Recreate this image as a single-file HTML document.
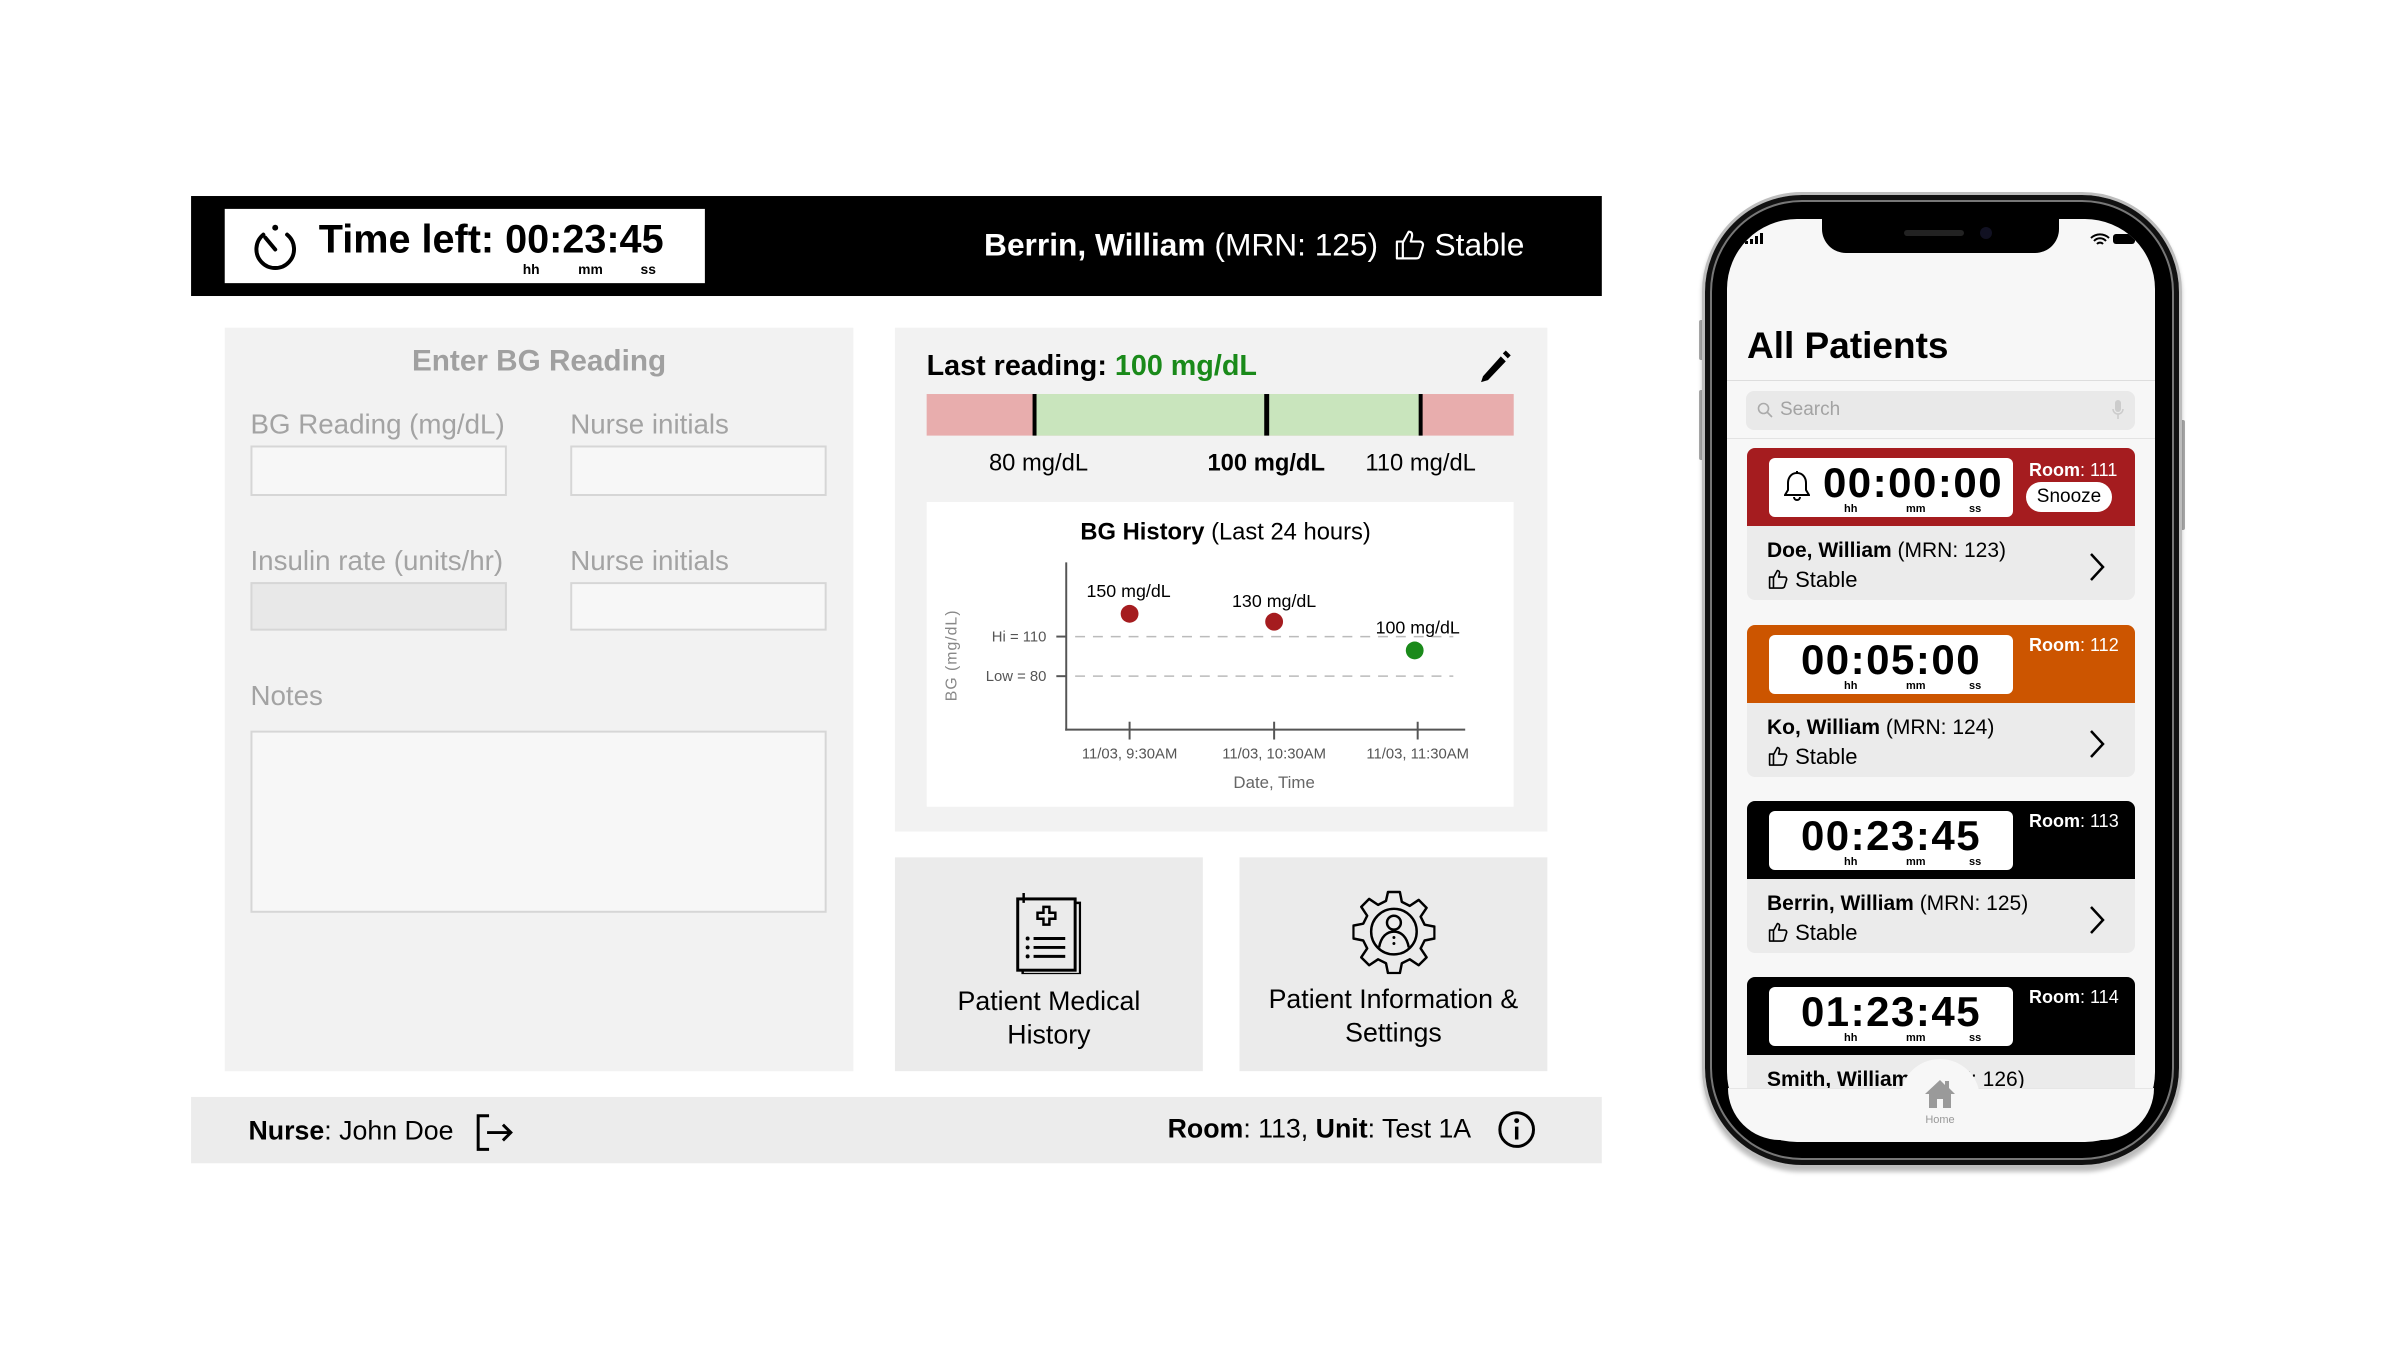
<!DOCTYPE html>
<html><head><meta charset="utf-8"><style>
*{margin:0;padding:0;box-sizing:border-box}
body{width:2382px;height:1360px;background:#fff;position:relative;overflow:hidden;font-family:"Liberation Sans",Arial,sans-serif;color:#000}
.a{position:absolute}
#L{position:absolute;left:0;top:0;width:2382px;height:1360px;transform:scale(0.99);transform-origin:0 0}
.lbl{position:absolute;font-size:28px;color:#a3a3a3;white-space:nowrap}
.inp{position:absolute;background:#f7f7f7;border:2px solid #d6d6d6}
.card{position:absolute;left:1747px;width:388px;height:152px;border-radius:8px;overflow:hidden;background:#ebebeb}
.ch{position:absolute;left:0;top:0;width:388px;height:78px}
.tb{position:absolute;left:22px;top:10px;width:244px;height:59px;background:#fff;border-radius:6px}
.dg{position:absolute;left:0;width:244px;text-align:center;top:2px;font-size:42px;font-weight:bold;letter-spacing:1.5px;line-height:46px}
.u{position:absolute;top:45px;font-size:11px;font-weight:bold}
.room{position:absolute;left:282px;top:10px;color:#fff;font-size:18px;white-space:nowrap}
.nm{position:absolute;left:20px;top:91px;font-size:21px;white-space:nowrap}
</style></head><body>
<div id="L">
<!-- Header -->
<div class="a" style="left:193px;top:198px;width:1425px;height:101px;background:#000"></div>
<div class="a" style="left:227px;top:211px;width:485px;height:75px;background:#fff"></div>
<svg class="a" style="left:254px;top:224px" width="48" height="50" viewBox="0 0 48 50"><path d="M12 13 A19 19 0 1 0 36 13" fill="none" stroke="#000" stroke-width="4" stroke-linecap="round"/><circle cx="24" cy="6" r="3" fill="#000"/><path d="M14 16 L24 28" stroke="#000" stroke-width="4" stroke-linecap="round"/></svg>
<div class="a" style="left:322px;top:220px;font-size:40px;font-weight:bold;white-space:nowrap">Time left: 00:23:45</div>
<div class="a" style="left:528px;top:264px;font-size:14px;font-weight:bold">hh</div>
<div class="a" style="left:584px;top:264px;font-size:14px;font-weight:bold">mm</div>
<div class="a" style="left:647px;top:264px;font-size:14px;font-weight:bold">ss</div>
<div class="a" style="left:994px;top:229px;font-size:32px;color:#fff;white-space:nowrap"><b>Berrin, William</b> (MRN: 125)</div>
<svg class="a" style="left:1408px;top:230px" width="32" height="34" viewBox="0 0 32 34"><path d="M3 14h6v17H3z M9 15 L15 4 c3 0 4 2 3 6 l-1 4 h9 c3 0 4 3 3 5 l-3 10 c-1 2-2 2-4 2 H9" fill="none" stroke="#fff" stroke-width="2.2" stroke-linejoin="round"/></svg>
<div class="a" style="left:1449px;top:229px;font-size:32px;color:#fff">Stable</div>

<!-- Left panel -->
<div class="a" style="left:227px;top:331px;width:635px;height:751px;background:#f2f2f2"></div>
<div class="a" style="left:227px;top:348px;width:635px;text-align:center;font-size:30px;font-weight:bold;color:#a0a0a0">Enter BG Reading</div>
<div class="lbl" style="left:253px;top:413px">BG Reading (mg/dL)</div>
<div class="lbl" style="left:576px;top:413px">Nurse initials</div>
<div class="inp" style="left:253px;top:450px;width:259px;height:51px"></div>
<div class="inp" style="left:576px;top:450px;width:259px;height:51px"></div>
<div class="lbl" style="left:253px;top:551px">Insulin rate (units/hr)</div>
<div class="lbl" style="left:576px;top:551px">Nurse initials</div>
<div class="inp" style="left:253px;top:588px;width:259px;height:49px;background:#e8e8e8"></div>
<div class="inp" style="left:576px;top:588px;width:259px;height:49px"></div>
<div class="lbl" style="left:253px;top:687px">Notes</div>
<div class="inp" style="left:253px;top:738px;width:582px;height:184px"></div>

<!-- Right top panel -->
<div class="a" style="left:904px;top:331px;width:659px;height:509px;background:#f2f2f2"></div>
<div class="a" style="left:936px;top:354px;font-size:29px;font-weight:bold;white-space:nowrap">Last reading: <span style="color:#1a8a1a">100 mg/dL</span></div>
<svg class="a" style="left:1492px;top:352px" width="36" height="36" viewBox="0 0 36 36"><path d="M6 28 L24 8 L29 13 L11 32 L4 34 Z" fill="#000"/><path d="M26 5 L29 2 L34 7 L31 10 Z" fill="#000"/></svg>
<div class="a" style="left:936px;top:398px;width:593px;height:42px;background:#e8adad"></div>
<div class="a" style="left:1045px;top:398px;width:390px;height:42px;background:#c9e5bd"></div>
<div class="a" style="left:1043px;top:398px;width:4px;height:42px;background:#000"></div>
<div class="a" style="left:1277px;top:398px;width:5px;height:42px;background:#000"></div>
<div class="a" style="left:1433px;top:398px;width:4px;height:42px;background:#000"></div>
<div class="a" style="left:989px;top:454px;width:120px;text-align:center;font-size:24px">80 mg/dL</div>
<div class="a" style="left:1209px;top:454px;width:140px;text-align:center;font-size:24px;font-weight:bold">100 mg/dL</div>
<div class="a" style="left:1365px;top:454px;width:140px;text-align:center;font-size:24px">110 mg/dL</div>

<svg class="a" style="left:936px;top:507px" width="593" height="308" viewBox="0 0 593 308" font-family="Liberation Sans, Arial, sans-serif">
<rect width="593" height="308" fill="#fff"/>
<text x="302" y="38" font-size="24" text-anchor="middle"><tspan font-weight="bold">BG History</tspan> (Last 24 hours)</text>
<line x1="141" y1="61" x2="141" y2="231" stroke="#555" stroke-width="2"/>
<line x1="140" y1="230" x2="544" y2="230" stroke="#555" stroke-width="2"/>
<line x1="131" y1="136" x2="141" y2="136" stroke="#555" stroke-width="2"/>
<line x1="131" y1="176" x2="141" y2="176" stroke="#555" stroke-width="2"/>
<line x1="150" y1="136" x2="532" y2="136" stroke="#bbb" stroke-width="1.5" stroke-dasharray="10 8"/>
<line x1="150" y1="176" x2="532" y2="176" stroke="#bbb" stroke-width="1.5" stroke-dasharray="10 8"/>
<text x="121" y="141" font-size="15" text-anchor="end" fill="#555">Hi = 110</text>
<text x="121" y="181" font-size="15" text-anchor="end" fill="#555">Low = 80</text>
<line x1="205" y1="222" x2="205" y2="240" stroke="#555" stroke-width="2"/>
<line x1="351" y1="222" x2="351" y2="240" stroke="#555" stroke-width="2"/>
<line x1="496" y1="222" x2="496" y2="240" stroke="#555" stroke-width="2"/>
<circle cx="205" cy="113" r="9" fill="#a51c1f"/>
<circle cx="351" cy="121" r="9" fill="#a51c1f"/>
<circle cx="493" cy="150" r="9" fill="#1a8a1a"/>
<text x="204" y="96" font-size="18" text-anchor="middle">150 mg/dL</text>
<text x="351" y="106" font-size="18" text-anchor="middle">130 mg/dL</text>
<text x="496" y="133" font-size="18" text-anchor="middle">100 mg/dL</text>
<text x="205" y="259" font-size="15" text-anchor="middle" fill="#555">11/03, 9:30AM</text>
<text x="351" y="259" font-size="15" text-anchor="middle" fill="#555">11/03, 10:30AM</text>
<text x="496" y="259" font-size="15" text-anchor="middle" fill="#555">11/03, 11:30AM</text>
<text x="351" y="289" font-size="17" text-anchor="middle" fill="#666">Date, Time</text>
<text x="0" y="0" font-size="16" text-anchor="middle" fill="#888" transform="translate(30 155) rotate(-90)" letter-spacing="1">BG (mg/dL)</text>
</svg>

<!-- Tiles -->
<div class="a" style="left:904px;top:866px;width:311px;height:216px;background:#ebebeb"></div>
<div class="a" style="left:1252px;top:866px;width:311px;height:216px;background:#ebebeb"></div>
<svg class="a" style="left:1024px;top:900px" width="68" height="84" viewBox="0 0 68 84"><rect x="4" y="8" width="58" height="72" fill="none" stroke="#000" stroke-width="3"/><path d="M9 80 v4 h58 v-72 h-4" fill="none" stroke="#000" stroke-width="2.5"/><path d="M10 2 v10" stroke="#000" stroke-width="2.5"/><path d="M24 22 h6 v-6 h6 v6 h6 v6 h-6 v6 h-6 v-6 h-6z" fill="none" stroke="#000" stroke-width="2.5"/><circle cx="14" cy="48" r="2" fill="#000"/><circle cx="14" cy="57" r="2" fill="#000"/><circle cx="14" cy="66" r="2" fill="#000"/><path d="M20 48h32M20 57h32M20 66h32" stroke="#000" stroke-width="3"/></svg>
<svg class="a" style="left:1366px;top:898px" width="84" height="86" viewBox="0 0 84 86"><path d="M36 3h12l2 10 8 4 9-6 8 8-6 9 4 8 10 2v12l-10 2-4 8 6 9-8 8-9-6-8 4-2 10H36l-2-10-8-4-9 6-8-8 6-9-4-8-10-2V37l10-2 4-8-6-9 8-8 9 6 8-4z" fill="none" stroke="#000" stroke-width="2.5" stroke-linejoin="round"/><circle cx="42" cy="43" r="23" fill="none" stroke="#000" stroke-width="2.5"/><circle cx="42" cy="34" r="7" fill="none" stroke="#000" stroke-width="2.5"/><path d="M27 59 c2-11 8-16 15-16 s13 5 15 16" fill="none" stroke="#000" stroke-width="2.5"/><circle cx="42" cy="49" r="1.5" fill="#000"/><circle cx="42" cy="55" r="1.5" fill="#000"/></svg>
<div class="a" style="left:904px;top:994px;width:311px;text-align:center;font-size:27px;line-height:34px">Patient Medical<br>History</div>
<div class="a" style="left:1252px;top:992px;width:311px;text-align:center;font-size:27px;line-height:34px">Patient Information &amp;<br>Settings</div>

<!-- Footer -->
<div class="a" style="left:193px;top:1108px;width:1425px;height:67px;background:#ececec"></div>
<div class="a" style="left:251px;top:1127px;font-size:27px;white-space:nowrap"><b>Nurse</b>: John Doe</div>
<svg class="a" style="left:480px;top:1125px" width="40" height="38" viewBox="0 0 40 38"><path d="M14 2 H3 V36 H14" fill="none" stroke="#000" stroke-width="3"/><path d="M12 19 H36 M28 11 L36 19 L28 27" fill="none" stroke="#000" stroke-width="3"/></svg>
<div class="a" style="left:1172px;top:1125px;width:314px;text-align:right;font-size:27px;white-space:nowrap"><b>Room</b>: 113, <b>Unit</b>: Test 1A</div>
<svg class="a" style="left:1512px;top:1121px" width="40" height="40" viewBox="0 0 40 40"><circle cx="20" cy="20" r="17" fill="none" stroke="#000" stroke-width="3"/><circle cx="20" cy="11" r="2.5" fill="#000"/><path d="M20 17v13" stroke="#000" stroke-width="3.5"/></svg>
</div>

<!-- Phone -->
<div class="a" style="left:1699px;top:320px;width:6px;height:40px;background:#aaa;border-radius:2px"></div>
<div class="a" style="left:1699px;top:390px;width:6px;height:70px;background:#aaa;border-radius:2px"></div>
<div class="a" style="left:2179px;top:420px;width:6px;height:110px;background:#aaa;border-radius:2px"></div>
<div class="a" style="left:1702px;top:192px;width:480px;height:976px;border-radius:100px;background:#000;border:3px solid #bdbdbd;box-shadow:inset 0 0 0 5px #111,inset 0 0 0 7px #777,0 4px 4px rgba(0,0,0,.25)"></div>
<div class="a" style="left:1727px;top:219px;width:428px;height:923px;border-radius:70px;background:#f7f7f7;overflow:hidden">
  <div class="a" style="left:95px;top:0;width:237px;height:34px;background:#000;border-radius:0 0 24px 24px"></div>
  <div class="a" style="left:177px;top:11px;width:60px;height:6px;background:#222;border-radius:3px"></div>
  <div class="a" style="left:253px;top:8px;width:12px;height:12px;background:#112;border-radius:50%"></div>
  <svg class="a" style="left:18px;top:14px" width="22" height="12"><rect x="0" y="8" width="3" height="3" fill="#000"/><rect x="5" y="6" width="3" height="5" fill="#000"/><rect x="10" y="3" width="3" height="8" fill="#000"/><rect x="15" y="0" width="3" height="11" fill="#000"/></svg>
  <svg class="a" style="left:363px;top:14px" width="20" height="14"><path d="M1 5 a13 13 0 0 1 18 0 M4 8 a8 8 0 0 1 12 0 M7 11 a4 4 0 0 1 6 0" fill="none" stroke="#000" stroke-width="2"/></svg>
  <div class="a" style="left:386px;top:15px;width:22px;height:10px;background:#000;border-radius:3px"></div>
  <div class="a" style="left:20px;top:106px;font-size:37px;font-weight:bold">All Patients</div>
  <div class="a" style="left:0;top:161px;width:428px;height:1px;background:#ddd"></div>
  <div class="a" style="left:19px;top:172px;width:389px;height:39px;background:#e9e9e9;border-radius:8px"></div>
  <svg class="a" style="left:30px;top:183px" width="16" height="16"><circle cx="6.5" cy="6.5" r="5" fill="none" stroke="#aaa" stroke-width="1.6"/><path d="M10 10 L15 15" stroke="#aaa" stroke-width="1.6"/></svg>
  <div class="a" style="left:53px;top:180px;font-size:19px;color:#a3a3a3">Search</div>
  <svg class="a" style="left:385px;top:180px" width="12" height="22"><rect x="3" y="1" width="6" height="12" rx="3" fill="#ccc"/><path d="M1 10 a5 5 0 0 0 10 0 M6 15 v5" fill="none" stroke="#ccc" stroke-width="1.5"/></svg>
  <div class="a" style="left:0;top:219px;width:428px;height:1px;background:#e3e3e3"></div>
</div>

<!-- Cards -->
<div class="card" style="top:448px">
  <div class="ch" style="background:#a51c1f"></div>
  <div class="tb">
    <svg class="a" style="left:15px;top:12px" width="26" height="32" viewBox="0 0 26 32"><path d="M13 3 c-6 0-9 5-9 10 v7 l-3 5 h24 l-3-5 v-7 c0-5-3-10-9-10z M10 27 a3 3 0 0 0 6 0 M13 1 v2" fill="none" stroke="#000" stroke-width="2"/></svg>
    <div class="dg" style="left:22px">00:00:00</div>
    <span class="u" style="left:75px">hh</span><span class="u" style="left:137px">mm</span><span class="u" style="left:200px">ss</span>
  </div>
  <div class="room" style="top:12px"><b>Room</b>: 111</div>
  <div class="a" style="left:279px;top:34px;width:86px;height:30px;background:#fff;border-radius:15px;text-align:center;font-size:19px;line-height:30px">Snooze</div>
  <div class="nm"><b>Doe, William</b> (MRN: 123)</div>
</div>
<div class="card" style="top:625px">
  <div class="ch" style="background:#cc5500"></div>
  <div class="tb"><div class="dg">00:05:00</div>
    <span class="u" style="left:75px">hh</span><span class="u" style="left:137px">mm</span><span class="u" style="left:200px">ss</span></div>
  <div class="room"><b>Room</b>: 112</div>
  <div class="nm"><b>Ko, William</b> (MRN: 124)</div>
</div>
<div class="card" style="top:801px">
  <div class="ch" style="background:#000"></div>
  <div class="tb"><div class="dg">00:23:45</div>
    <span class="u" style="left:75px">hh</span><span class="u" style="left:137px">mm</span><span class="u" style="left:200px">ss</span></div>
  <div class="room"><b>Room</b>: 113</div>
  <div class="nm"><b>Berrin, William</b> (MRN: 125)</div>
</div>
<div class="card" style="top:977px;height:120px;border-radius:8px 8px 0 0">
  <div class="ch" style="background:#000"></div>
  <div class="tb"><div class="dg">01:23:45</div>
    <span class="u" style="left:75px">hh</span><span class="u" style="left:137px">mm</span><span class="u" style="left:200px">ss</span></div>
  <div class="room"><b>Room</b>: 114</div>
  <div class="nm"><b>Smith, William</b> (MRN: 126)</div>
</div>

<div class="a" style="left:1767px;top:567px;font-size:22px;white-space:nowrap"><svg width="22" height="22" viewBox="0 0 32 34" style="vertical-align:-3px"><path d="M3 14h6v17H3z M9 15 L15 4 c3 0 4 2 3 6 l-1 4 h9 c3 0 4 3 3 5 l-3 10 c-1 2-2 2-4 2 H9" fill="none" stroke="#000" stroke-width="2.5" stroke-linejoin="round"/></svg> Stable</div>
<div class="a" style="left:1767px;top:744px;font-size:22px;white-space:nowrap"><svg width="22" height="22" viewBox="0 0 32 34" style="vertical-align:-3px"><path d="M3 14h6v17H3z M9 15 L15 4 c3 0 4 2 3 6 l-1 4 h9 c3 0 4 3 3 5 l-3 10 c-1 2-2 2-4 2 H9" fill="none" stroke="#000" stroke-width="2.5" stroke-linejoin="round"/></svg> Stable</div>
<div class="a" style="left:1767px;top:920px;font-size:22px;white-space:nowrap"><svg width="22" height="22" viewBox="0 0 32 34" style="vertical-align:-3px"><path d="M3 14h6v17H3z M9 15 L15 4 c3 0 4 2 3 6 l-1 4 h9 c3 0 4 3 3 5 l-3 10 c-1 2-2 2-4 2 H9" fill="none" stroke="#000" stroke-width="2.5" stroke-linejoin="round"/></svg> Stable</div>
<svg class="a" style="left:2089px;top:552px" width="16" height="30"><path d="M2 2 L14 15 L2 28" fill="none" stroke="#000" stroke-width="2.5"/></svg>
<svg class="a" style="left:2089px;top:729px" width="16" height="30"><path d="M2 2 L14 15 L2 28" fill="none" stroke="#000" stroke-width="2.5"/></svg>
<svg class="a" style="left:2089px;top:905px" width="16" height="30"><path d="M2 2 L14 15 L2 28" fill="none" stroke="#000" stroke-width="2.5"/></svg>

<!-- Tab bar -->
<div class="a" style="left:1728px;top:1088px;width:426px;height:52px;background:#f7f7f7;border-top:1px solid #e6e6e6;border-radius:0 0 68px 68px"></div>
<div class="a" style="left:1900px;top:1059px;width:80px;height:80px;border-radius:50%;background:#f7f7f7"></div>
<svg class="a" style="left:1924px;top:1078px" width="32" height="32" viewBox="0 0 32 32"><path d="M16 2 L1 16 h4 v14 h8 v-9 h6 v9 h8 V16 h4 L25 10 V3 h-4 v4z" fill="#9a9a9a"/></svg>
<div class="a" style="left:1900px;top:1114px;width:80px;text-align:center;font-size:11px;color:#999">Home</div>
</body></html>
